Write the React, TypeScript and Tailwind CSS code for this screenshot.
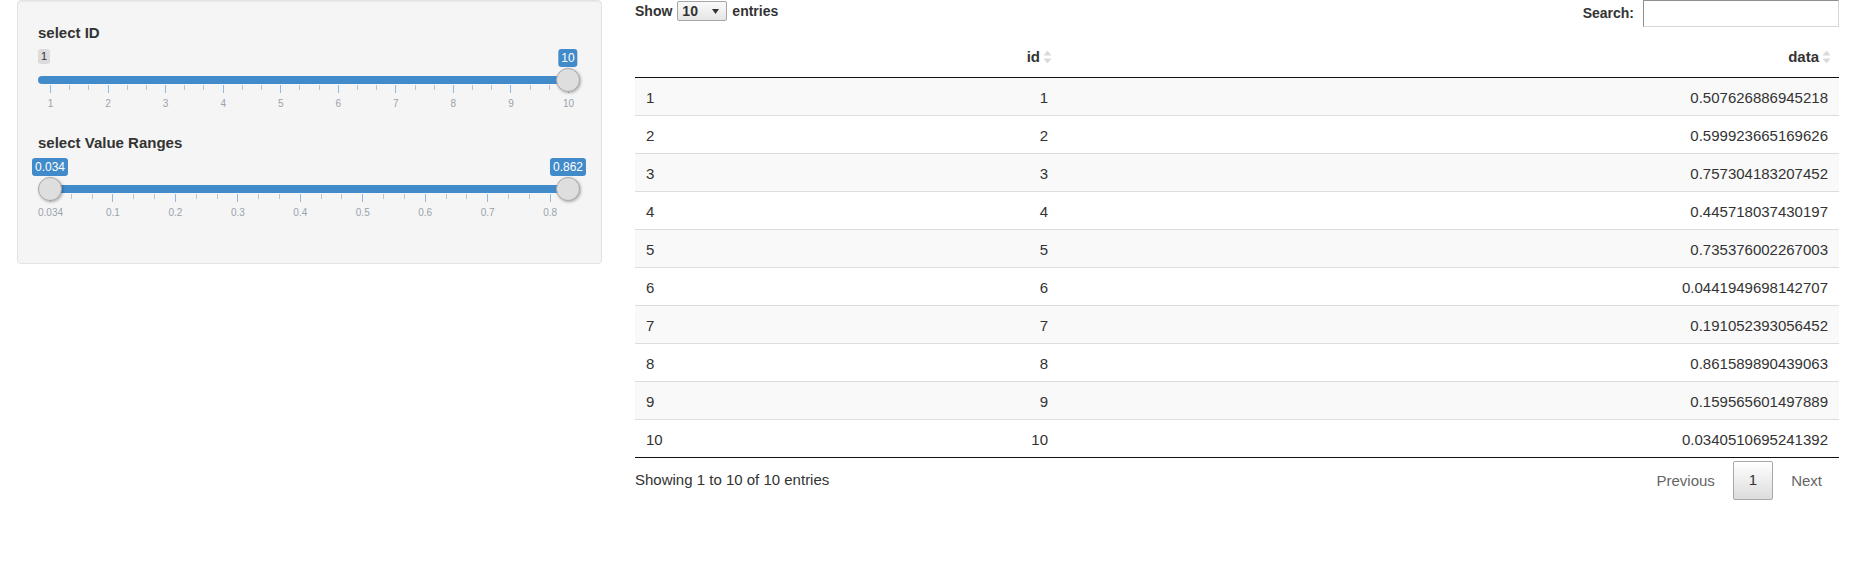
import React from "react";

const rows: [number, string][] = [
  [1, "0.507626886945218"],
  [2, "0.599923665169626"],
  [3, "0.757304183207452"],
  [4, "0.445718037430197"],
  [5, "0.735376002267003"],
  [6, "0.0441949698142707"],
  [7, "0.191052393056452"],
  [8, "0.861589890439063"],
  [9, "0.159565601497889"],
  [10, "0.0340510695241392"],
];

function SortIcon() {
  return (
    <svg width="9" height="14" viewBox="0 0 9 14" className="shrink-0">
      <path d="M4.5 0.5 L8.5 5.5 L0.5 5.5 Z" fill="#dadada" />
      <path d="M4.5 13.5 L8.5 8.5 L0.5 8.5 Z" fill="#dadada" />
    </svg>
  );
}

type Tick = { x: number; major: boolean };
type Label = { x: number; text: string };

function Slider({
  ticks,
  labels,
  handles,
  barFrom,
  barTo,
  roundedLeft,
  badges,
  minBadge,
}: {
  ticks: Tick[];
  labels: Label[];
  handles: number[];
  barFrom: number;
  barTo: number;
  roundedLeft: boolean;
  badges: Label[];
  minBadge?: string;
}) {
  return (
    <div className="relative h-[66px] w-full">
      {minBadge && (
        <div className="absolute left-0 top-[2px] rounded-[3px] bg-[rgba(0,0,0,0.1)] px-[3px] py-px text-[11px] leading-[13px] text-[#333]">
          {minBadge}
        </div>
      )}
      {badges.map((b, i) => (
        <div
          key={i}
          className="absolute top-[2px] -translate-x-1/2 whitespace-nowrap rounded-[3px] bg-[#428bca] px-[3px] py-px text-[12px] leading-[16px] text-white"
          style={{ left: b.x }}
        >
          {b.text}
        </div>
      ))}
      <div
        className={
          "absolute top-[29px] h-[8px] bg-[#428bca] " +
          (roundedLeft ? "rounded-l-[4px]" : "")
        }
        style={{ left: barFrom, width: barTo - barFrom }}
      />
      {ticks.map((t, i) =>
        t.major ? (
          <div
            key={i}
            className="absolute top-[38px] h-[8px] w-px bg-[#93b9df]"
            style={{ left: Math.round(t.x) }}
          />
        ) : (
          <div
            key={i}
            className="absolute top-[38px] h-[5px] w-px bg-[#c2c2c2]"
            style={{ left: Math.round(t.x) }}
          />
        )
      )}
      {labels.map((l, i) => (
        <div
          key={i}
          className="absolute top-[51px] -translate-x-1/2 whitespace-nowrap text-[10px] leading-[12px] text-[#9aa3ab]"
          style={{ left: l.x + 0.5 }}
        >
          {l.text}
        </div>
      ))}
      {handles.map((h, i) => (
        <div
          key={i}
          className="absolute top-[21px] h-[24px] w-[24px] rounded-full border border-[#aaa] bg-[#dedede] shadow-[1px_1px_3px_rgba(0,0,0,0.3)]"
          style={{ left: h - 12 }}
        />
      ))}
    </div>
  );
}

export default function App() {
  const span = 518;
  const s1Ticks: Tick[] = [];
  for (let k = 0; k <= 27; k++) s1Ticks.push({ x: 12 + (k * span) / 27, major: k % 3 === 0 });
  const s1Labels: Label[] = [];
  for (let k = 0; k <= 9; k++) s1Labels.push({ x: 12 + (k * span) / 9, text: String(k + 1) });

  const step2 = 62.45;
  const s2Ticks: Tick[] = [];
  for (let k = 0; k <= 24; k++) s2Ticks.push({ x: 12 + (k * step2) / 3, major: k % 3 === 0 });
  const s2Text = ["0.034", "0.1", "0.2", "0.3", "0.4", "0.5", "0.6", "0.7", "0.8"];
  const s2Labels: Label[] = s2Text.map((t, k) => ({ x: 12 + k * step2, text: t }));
  const end = 12 + span;

  return (
    <div className="flex bg-white pl-[17px] font-['Liberation_Sans',Arial,sans-serif] text-[#333]">
      {/* Sidebar well */}
      <div className="h-[264px] w-[585px] shrink-0 rounded-[4px] border border-[#e3e3e3] bg-[#f5f5f5] px-[20px] pt-[21px] shadow-[inset_0_1px_1px_rgba(0,0,0,0.05)]">
        <div className="text-[15px] font-bold leading-[21px]">select ID</div>
        <div className="mt-[4px]">
          <Slider
            ticks={s1Ticks}
            labels={s1Labels}
            handles={[end]}
            barFrom={0}
            barTo={end}
            roundedLeft
            badges={[{ x: end, text: "10" }]}
            minBadge="1"
          />
        </div>
        <div className="mt-[19px] text-[15px] font-bold leading-[21px]">select Value Ranges</div>
        <div className="mt-[3px]">
          <Slider
            ticks={s2Ticks}
            labels={s2Labels}
            handles={[12, end]}
            barFrom={12}
            barTo={end}
            roundedLeft={false}
            badges={[
              { x: 12, text: "0.034" },
              { x: end, text: "0.862" },
            ]}
          />
        </div>
      </div>

      {/* Main panel */}
      <div className="ml-[33px] w-[1204px] shrink-0">
        <div className="flex h-[37px] items-start justify-between">
          <div className="flex h-[22px] items-center text-[14px] font-bold">
            <span>Show</span>
            <div className="ml-[5px] flex h-[20px] w-[50px] items-center justify-between rounded-[2px] border border-[#a6a6a6] bg-[linear-gradient(#fafafa,#e6e6e6)] pl-[4px] pr-[7px]">
              <span className="text-[14px] font-bold leading-none">10</span>
              <svg width="7" height="5" viewBox="0 0 7 5">
                <path d="M0 0 L7 0 L3.5 5 Z" fill="#333" />
              </svg>
            </div>
            <span className="ml-[5px]">entries</span>
          </div>
          <div className="flex h-[27px] items-center text-[14px] font-bold">
            <span>Search:</span>
            <div className="ml-[9px] h-[27px] w-[196px] border border-b-[#d6d6d6] border-l-[#8f8f8f] border-r-[#d6d6d6] border-t-[#8f8f8f] bg-white" />
          </div>
        </div>

        {/* Table */}
        <div className="text-[15px]">
          <div className="grid h-[41px] grid-cols-[212px_211px_781px] border-b border-[#111] font-bold">
            <div />
            <div className="flex items-center justify-end gap-[3px] pr-[6px]">
              <span>id</span>
              <SortIcon />
            </div>
            <div className="flex items-center justify-end gap-[3px] pr-[8px]">
              <span>data</span>
              <SortIcon />
            </div>
          </div>
          {rows.map(([id, val], i) => (
            <div
              key={id}
              className={
                "grid h-[38px] grid-cols-[212px_211px_781px] items-center border-b pt-[1px] leading-[21px] " +
                (i === rows.length - 1 ? "border-[#111] " : "border-[#ddd] ") +
                (i % 2 === 0 ? "bg-[#f9f9f9]" : "bg-white")
              }
            >
              <div className="pl-[11px]">{id}</div>
              <div className="pr-[10px] text-right">{id}</div>
              <div className="pr-[11px] text-right">{val}</div>
            </div>
          ))}
        </div>

        {/* Footer */}
        <div className="mt-[3px] flex items-center justify-between text-[15px]">
          <div>Showing 1 to 10 of 10 entries</div>
          <div className="flex items-center">
            <div className="border border-transparent px-[15px] leading-[21px] text-[#666]">Previous</div>
            <div className="ml-[2px] flex h-[39px] items-center rounded-[2px] border border-[#a8a8a8] bg-[linear-gradient(#ffffff,#dcdcdc)] px-[15px] text-[#333]">
              1
            </div>
            <div className="ml-[2px] mr-[1px] border border-transparent px-[15px] leading-[21px] text-[#666]">Next</div>
          </div>
        </div>
      </div>
    </div>
  );
}
